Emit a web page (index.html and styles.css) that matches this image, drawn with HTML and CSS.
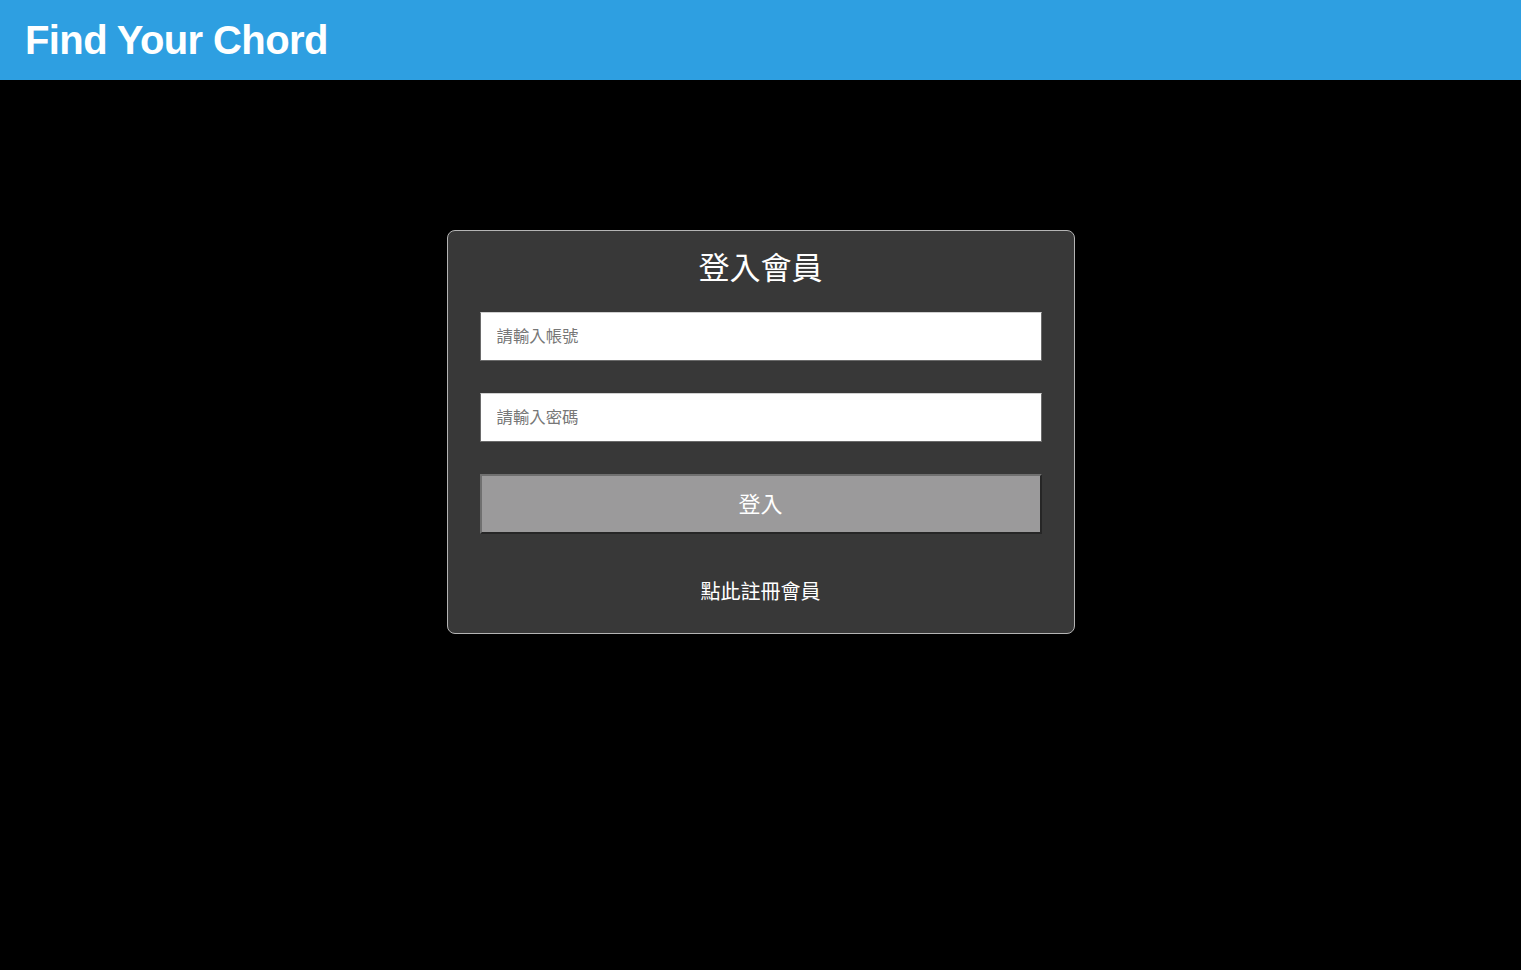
FILE: index.html
```html
<!DOCTYPE html>
<html lang="zh-Hant">
<head>
<meta charset="utf-8">
<title>Find Your Chord</title>
<link rel="stylesheet" href="styles.css">
</head>
<body>
<header class="topbar">
  <h1 class="brand">Find Your Chord</h1>
</header>
<main class="main">
  <form class="card">
    <h2 class="card-title">登入會員</h2>
    <input class="field" type="text" placeholder="請輸入帳號">
    <input class="field" type="password" placeholder="請輸入密碼">
    <button class="btn" type="button">登入</button>
    <a class="register" href="#">點此註冊會員</a>
  </form>
</main>
</body>
</html>
```
FILE: styles.css
```css
* { box-sizing: border-box; }
html, body { margin: 0; padding: 0; }
body {
  background: #000;
  min-height: 970px;
  font-family: "Liberation Sans", "Noto Sans CJK TC", sans-serif;
}
.topbar {
  height: 80px;
  background: #2e9fe1;
  display: flex;
  align-items: center;
  padding-left: 25px;
}
.brand {
  margin: 0;
  color: #fff;
  font-family: "Liberation Sans", sans-serif;
  font-weight: 700;
  font-size: 40px;
  letter-spacing: -0.6px;
  line-height: 1;
}
.main {
  display: flex;
  justify-content: center;
  padding-top: 150px;
}
.card {
  width: 628px;
  height: 404px;
  background: #383838;
  border: 1px solid #b4b4b4;
  border-radius: 8px;
  padding: 8px 32px 26px 32px;
  display: flex;
  flex-direction: column;
  align-items: stretch;
}
.card-title {
  margin: 0;
  text-align: center;
  color: #fff;
  font-family: "Noto Sans CJK TC", sans-serif;
  font-weight: 400;
  font-size: 31px;
  line-height: 54px;
}
.field {
  height: 49px;
  margin-top: 19px;
  border: 1px solid #6a6a6a;
  border-top-color: #d0d0d0;
  background: #fff;
  padding: 0 16px 4px 16px;
  font-family: "Noto Sans CJK TC", sans-serif;
  font-size: 16.4px;
  color: #333;
  outline: none;
}
.field + .field { margin-top: 32px; }
.field::placeholder { color: #777; }
.btn {
  margin-top: 32px;
  height: 60px;
  background: #9b9a9b;
  border: 2px solid;
  border-color: #707070 #262626 #262626 #707070;
  color: #fff;
  font-family: "Noto Sans CJK TC", sans-serif;
  font-size: 22px;
  padding: 0 0 4px 0;
}
.register {
  margin-top: 42px;
  text-align: center;
  color: #fff;
  text-decoration: none;
  font-family: "Noto Sans CJK TC", sans-serif;
  font-size: 20px;
  line-height: 30px;
}
```
